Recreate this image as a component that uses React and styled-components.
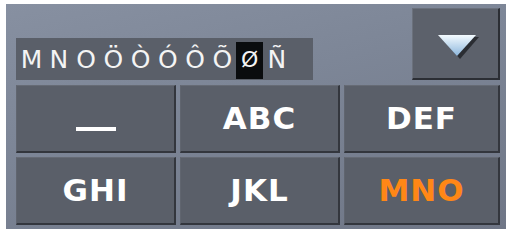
import React from "react";
import styled, { createGlobalStyle } from "styled-components";

const GlobalStyles = createGlobalStyle`
  html, body {
    margin: 0;
    padding: 0;
    background: #ffffff;
  }
`;

const Panel = styled.div`
  box-sizing: border-box;
  width: 500px;
  height: 225px;
  margin: 4px 0 0 6px;
  padding: 4px 6px 0 10px;
  display: flex;
  flex-direction: column;
  gap: 5px;
  background: linear-gradient(165deg, #8790a1 0%, #7d8697 40%, #6f7686 100%);
  font-family: "DejaVu Sans", "Liberation Sans", sans-serif;
`;

const TopRow = styled.div`
  display: flex;
  align-items: flex-end;
  justify-content: space-between;
`;

const Field = styled.div`
  box-sizing: border-box;
  width: 297px;
  height: 42px;
  padding: 4px 0 1px 2px;
  display: flex;
  background: #5a5f69;
`;

const Char = styled.span`
  width: 27.25px;
  height: 37px;
  display: flex;
  align-items: center;
  justify-content: center;
  padding-bottom: 2px;
  box-sizing: border-box;
  font-family: "DejaVu Sans", "Liberation Sans", sans-serif;
  font-size: ${(p) => (p.$selected ? "22px" : "25px")};
  color: #f4f4f4;
  background: ${(p) => (p.$selected ? "#0a0c0e" : "transparent")};
`;

const DropButton = styled.button`
  box-sizing: border-box;
  width: 88px;
  height: 72px;
  padding: 8px 0 0 4px;
  display: flex;
  align-items: center;
  justify-content: center;
  background: #5c616b;
  border: none;
  border-top: 1px solid #6b717c;
  border-left: 1px solid #6b717c;
  border-right: 2px solid #2b2e34;
  border-bottom: 2px solid #2b2e34;
`;

const Keys = styled.div`
  display: grid;
  grid-template-columns: 160px 160px 156px;
  grid-template-rows: 68px 68px;
  gap: 4px;
`;

const Key = styled.button`
  box-sizing: border-box;
  display: flex;
  align-items: center;
  justify-content: center;
  padding: 0 0 2px 0;
  background: #5a5f69;
  border: none;
  border-top: 1px solid #666b75;
  border-left: 1px solid #60656f;
  border-right: 2px solid #33363d;
  border-bottom: 2px solid #33363d;
  font-family: "DejaVu Sans", "Verdana", sans-serif;
  font-weight: bold;
  font-size: 31px;
  letter-spacing: 1px;
  color: ${(p) => (p.$active ? "#ff8716" : "#ffffff")};
`;

const SpaceBar = styled.span`
  display: block;
  width: 40px;
  height: 4px;
  margin-top: 22px;
  background: #ffffff;
`;

const chars = ["M", "N", "O", "Ö", "Ò", "Ó", "Ô", "Õ", "Ø", "Ñ"];
const keys = ["_", "ABC", "DEF", "GHI", "JKL", "MNO"];

function Arrow() {
  return (
    <svg width="44" height="28" viewBox="0 0 44 28">
      <defs>
        <linearGradient id="tri" x1="0" y1="0" x2="0" y2="1">
          <stop offset="0" stopColor="#f4fbff" />
          <stop offset="1" stopColor="#8cb6dc" />
        </linearGradient>
      </defs>
      <polygon points="5,3 43,3 24,25" fill="#1e2126" opacity="0.8" />
      <polygon points="2,1 40,1 21,22" fill="url(#tri)" />
    </svg>
  );
}

export default function App() {
  return (
    <>
      <GlobalStyles />
      <Panel>
        <TopRow>
          <Field>
            {chars.map((c, i) => (
              <Char key={i} $selected={c === "Ø"}>
                {c}
              </Char>
            ))}
          </Field>
          <DropButton>
            <Arrow />
          </DropButton>
        </TopRow>
        <Keys>
          {keys.map((k) => (
            <Key key={k} $active={k === "MNO"}>
              {k === "_" ? <SpaceBar aria-label="_" /> : k}
            </Key>
          ))}
        </Keys>
      </Panel>
    </>
  );
}
